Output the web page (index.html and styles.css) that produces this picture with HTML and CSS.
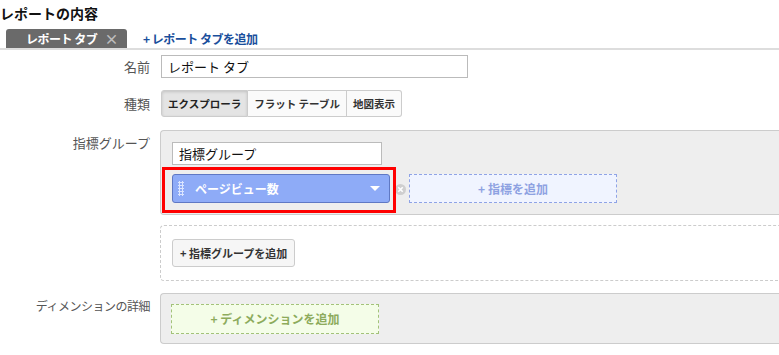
FILE: index.html
```html
<!DOCTYPE html>
<html>
<head>
<meta charset="utf-8">
<link rel="stylesheet" href="styles.css">
</head>
<body>

<h1 class="title">レポートの内容</h1>

<div class="tabbar">
  <div class="tab">レポート タブ <span class="tab-close">&times;</span></div>
  <a class="add-tab" href="#">+ レポート タブを追加</a>
</div>

<div class="form">
  <div class="row row-name">
    <div class="label">名前</div>
    <div class="field">
      <input class="text-input name-input" type="text" value="レポート タブ">
    </div>
  </div>

  <div class="row row-type">
    <div class="label">種類</div>
    <div class="field">
      <div class="btn-group">
        <button class="seg seg-on">エクスプローラ</button>
        <button class="seg">フラット テーブル</button>
        <button class="seg">地図表示</button>
      </div>
    </div>
  </div>

  <div class="row row-metrics">
    <div class="label label-top">指標グループ</div>
    <div class="field">
      <div class="group-box">
        <input class="text-input group-input" type="text" value="指標グループ">
        <div class="metric-line">
          <div class="chip-wrap">
            <div class="chip">
              <span class="grip"></span>
              <span class="chip-text">ページビュー数</span>
              <span class="caret"></span>
            </div>
            <div class="highlight"></div>
          </div>
          <span class="remove">
            <svg width="11" height="11" viewBox="0 0 11 11"><circle cx="5.5" cy="5.5" r="5.5" fill="#cfcfcf"/><path d="M3.3 3.3 L7.7 7.7 M7.7 3.3 L3.3 7.7" stroke="#fff" stroke-width="1.6"/></svg>
          </span>
          <div class="add-metric">+ 指標を追加</div>
        </div>
      </div>
      <div class="group-empty">
        <button class="plain-btn">+ 指標グループを追加</button>
      </div>
    </div>
  </div>

  <div class="row row-dims">
    <div class="label label-top label-narrow">ディメンションの詳細</div>
    <div class="field">
      <div class="dim-box">
        <div class="add-dim">+ ディメンションを追加</div>
      </div>
    </div>
  </div>
</div>

</body>
</html>
```

FILE: styles.css
```css
body {
  margin: 0;
  font-family: "Noto Sans CJK JP", "Liberation Sans", sans-serif;
  font-size: 12px;
  color: #333;
  background-color: #fff;
  overflow: hidden;
}

.title {
  margin: 0;
  padding: 3px 0 0 0;
  font-size: 14px;
  line-height: 20px;
  font-weight: bold;
  color: #111;
}

.tabbar {
  display: flex;
  align-items: center;
  margin-top: 6px;
  padding-left: 6px;
  border-bottom: 2px solid #ddd;
}

.tab {
  width: 121px;
  height: 19px;
  box-sizing: border-box;
  padding-left: 20px;
  background-color: #6a6a6a;
  color: #fff;
  font-weight: bold;
  font-size: 12px;
  line-height: 19px;
  letter-spacing: -0.5px;
  border-radius: 3px 3px 0 0;
}

.tab-close {
  margin-left: 5px;
  color: #bdbdbd;
  font-size: 14px;
}

.add-tab {
  margin-left: 16px;
  color: #1a4f9c;
  font-weight: bold;
  font-size: 12px;
  letter-spacing: -0.5px;
  text-decoration: none;
}

.form {
  padding-top: 5px;
}

.row {
  display: flex;
  align-items: center;
  gap: 10px;
}

.label {
  width: 150px;
  flex: none;
  text-align: right;
  font-size: 13px;
  color: #555;
  line-height: 16px;
}

.label-top {
  align-self: flex-start;
  padding-top: 5px;
}

.label-narrow {
  font-size: 12px;
  letter-spacing: -0.5px;
}

.field {
  flex: none;
  width: 640px;
}

.text-input {
  display: block;
  box-sizing: border-box;
  margin: 0;
  border: 1px solid #bbb;
  padding: 0 6px;
  font-family: "Noto Sans CJK JP", "Liberation Sans", sans-serif;
  font-size: 13px;
  color: #111;
  background-color: #fff;
  outline: 0;
}

.name-input {
  margin-left: 1px;
  width: 307px;
  height: 23px;
}

.row-type {
  margin-top: 12px;
}

.btn-group {
  display: flex;
  margin-left: 1px;
}

.seg {
  height: 27px;
  margin: 0;
  padding: 0 6px;
  border: 1px solid #ccc;
  border-left: none;
  background-color: #fafafa;
  font-family: "Noto Sans CJK JP", "Liberation Sans", sans-serif;
  font-size: 10.5px;
  font-weight: bold;
  color: #333;
  cursor: pointer;
}

.seg:first-child {
  border-left: 1px solid #ccc;
  border-radius: 3px 0 0 3px;
}

.seg:last-child {
  border-radius: 0 3px 3px 0;
}

.seg-on {
  background-color: #e4e4e4;
  box-shadow: inset 0 1px 3px rgba(0,0,0,0.15);
  color: #222;
}

.row-metrics {
  margin-top: 13px;
}

.group-box {
  box-sizing: border-box;
  height: 85px;
  border: 1px solid #ccc;
  border-right: none;
  border-radius: 4px 0 0 4px;
  background-color: #eee;
  padding: 11px 0 0 11px;
}

.group-input {
  width: 210px;
  height: 23px;
}

.metric-line {
  display: flex;
  align-items: center;
  margin-top: 9px;
}

.chip-wrap {
  position: relative;
}

.chip {
  display: flex;
  align-items: center;
  box-sizing: border-box;
  width: 218px;
  height: 29px;
  background-color: #8eabf7;
  border: 1px solid #5f78c4;
  border-radius: 3px;
  color: #fff;
  font-weight: bold;
  font-size: 12px;
}

.grip {
  width: 6px;
  height: 15px;
  margin-left: 5px;
  background-image: radial-gradient(circle, #dbe5ff 1px, transparent 1.3px);
  background-size: 3px 3px;
}

.chip-text {
  margin-left: 11px;
  flex: 1;
}

.caret {
  width: 0;
  height: 0;
  margin-right: 9px;
  border-left: 5px solid transparent;
  border-right: 5px solid transparent;
  border-top: 5px solid #fff;
}

/* red annotation frame */
.highlight {
  position: absolute;
  left: -10px;
  top: -7px;
  width: 228px;
  height: 40px;
  border: 3px solid #f00;
}

.remove {
  display: flex;
  margin-left: 5px;
  margin-right: 3px;
  margin-top: 2px;
}

.add-metric {
  box-sizing: border-box;
  width: 208px;
  height: 29px;
  line-height: 27px;
  text-align: center;
  background-color: #f0f4ff;
  border: 1px dashed #8fa3e6;
  color: #8ea2e2;
  font-weight: bold;
  font-size: 12px;
}

.group-empty {
  box-sizing: border-box;
  height: 56px;
  margin-top: 10px;
  border: 1px dashed #ccc;
  border-right: none;
  border-radius: 4px 0 0 4px;
  padding: 13px 0 0 11px;
}

.plain-btn {
  height: 28px;
  margin: 0;
  padding: 0 7px;
  border: 1px solid #ccc;
  border-radius: 3px;
  background-color: #f6f6f6;
  font-family: "Noto Sans CJK JP", "Liberation Sans", sans-serif;
  font-size: 11px;
  font-weight: bold;
  color: #333;
}

.row-dims {
  margin-top: 12px;
}

.dim-box {
  box-sizing: border-box;
  height: 51px;
  border: 1px solid #ccc;
  border-right: none;
  border-radius: 4px 0 0 4px;
  background-color: #eee;
  padding: 10px 0 0 10px;
}

.add-dim {
  box-sizing: border-box;
  width: 208px;
  height: 30px;
  line-height: 28px;
  text-align: center;
  background-color: #f4fde8;
  border: 1px dashed #a3c27a;
  color: #8dab5c;
  font-weight: bold;
  font-size: 12px;
}
```
